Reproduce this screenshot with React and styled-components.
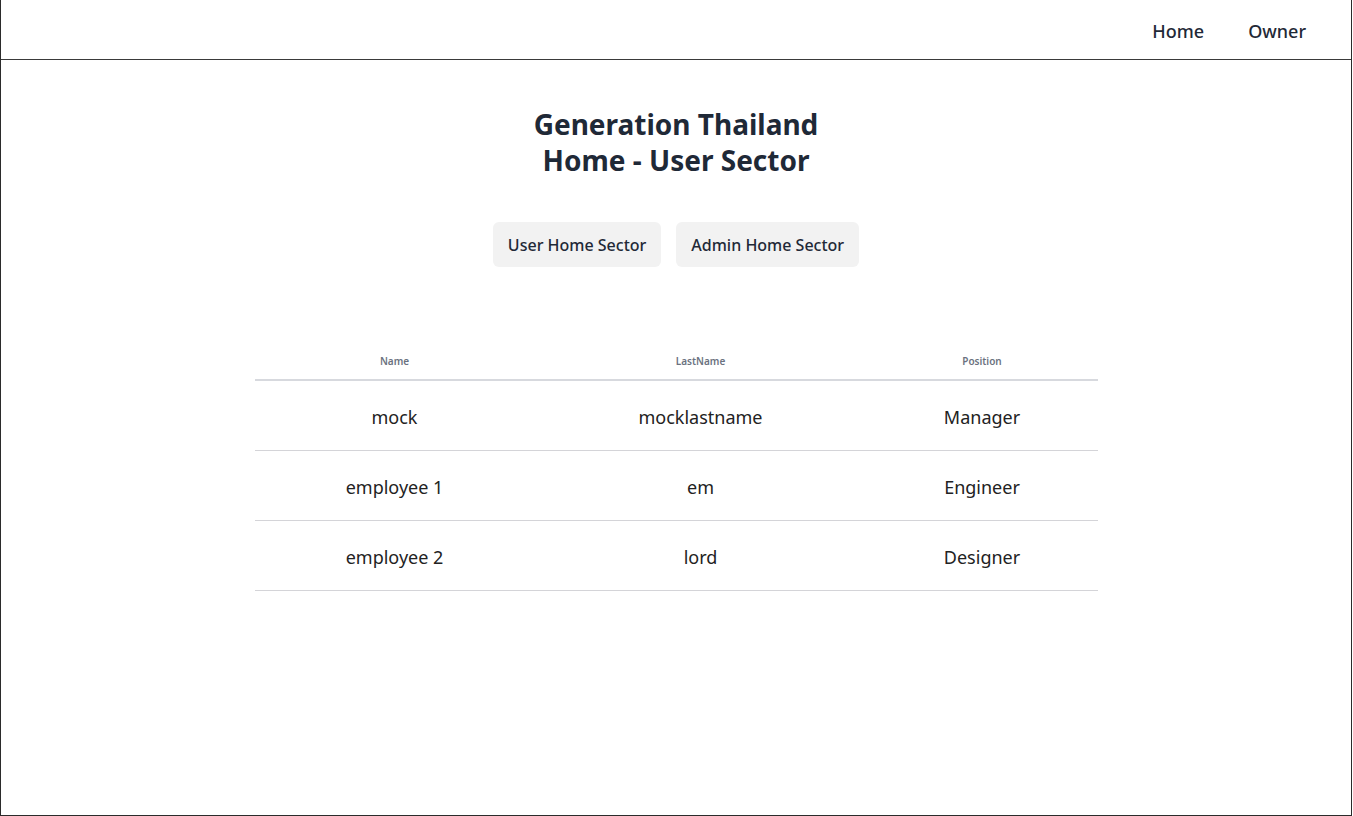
import React from 'react';
import styled, { createGlobalStyle } from 'styled-components';

const GlobalStyle = createGlobalStyle`
  * { box-sizing: border-box; }
  body {
    margin: 0;
    font-family: "Noto Sans", "Open Sans", sans-serif;
    color: #1f2937;
    background: #fff;
  }
`;

const Page = styled.div`
  width: 1352px;
  height: 816px;
  border-left: 1px solid #2b2b2b;
  border-right: 1px solid #2b2b2b;
  border-bottom: 1px solid #2b2b2b;
  display: flex;
  flex-direction: column;
`;

const Navbar = styled.nav`
  height: 60px;
  padding-top: 2px;
  border-bottom: 1px solid #3a3a3a;
  display: flex;
  justify-content: flex-end;
  align-items: center;
  gap: 44px;
  padding-right: 45px;
`;

const NavLink = styled.a`
  font-size: 18px;
  font-weight: 500;
  color: #1f2937;
  text-decoration: none;
  cursor: pointer;
`;

const Main = styled.main`
  display: flex;
  flex-direction: column;
  align-items: center;
  padding-top: 46px;
`;

const Title = styled.h1`
  margin: 0;
  font-size: 28px;
  line-height: 36px;
  font-weight: 700;
  text-align: center;
  color: #1f2937;
`;

const ButtonRow = styled.div`
  display: flex;
  gap: 15px;
  margin-top: 44px;
`;

const SectorButton = styled.button`
  height: 45px;
  padding: 0 15px;
  border: none;
  border-radius: 6px;
  background: #f2f2f2;
  font-family: inherit;
  font-size: 16px;
  font-weight: 500;
  color: #1f2937;
  cursor: pointer;
`;

const Table = styled.table`
  margin-top: 76px;
  width: 843px;
  border-collapse: collapse;
`;

const HeadCell = styled.th`
  height: 37px;
  padding: 0;
  font-size: 10px;
  font-weight: 600;
  color: #6b7280;
  text-align: center;
  border-bottom: 2px solid #d7d9de;
  width: ${p => p.$w}px;
`;

const Cell = styled.td`
  height: 70px;
  padding: 3px 0 0;
  font-size: 18px;
  color: #222;
  text-align: center;
  border-bottom: 1px solid #d4d4d8;
`;

const rows = [
  { name: 'mock', last: 'mocklastname', position: 'Manager' },
  { name: 'employee 1', last: 'em', position: 'Engineer' },
  { name: 'employee 2', last: 'lord', position: 'Designer' },
];

export default function App() {
  return (
    <>
      <GlobalStyle />
      <Page>
        <Navbar>
          <NavLink>Home</NavLink>
          <NavLink>Owner</NavLink>
        </Navbar>
        <Main>
          <Title>
            Generation Thailand
            <br />
            Home - User Sector
          </Title>
          <ButtonRow>
            <SectorButton>User Home Sector</SectorButton>
            <SectorButton>Admin Home Sector</SectorButton>
          </ButtonRow>
          <Table>
            <thead>
              <tr>
                <HeadCell $w={280}>Name</HeadCell>
                <HeadCell $w={332}>LastName</HeadCell>
                <HeadCell $w={231}>Position</HeadCell>
              </tr>
            </thead>
            <tbody>
              {rows.map(r => (
                <tr key={r.name}>
                  <Cell>{r.name}</Cell>
                  <Cell>{r.last}</Cell>
                  <Cell>{r.position}</Cell>
                </tr>
              ))}
            </tbody>
          </Table>
        </Main>
      </Page>
    </>
  );
}
